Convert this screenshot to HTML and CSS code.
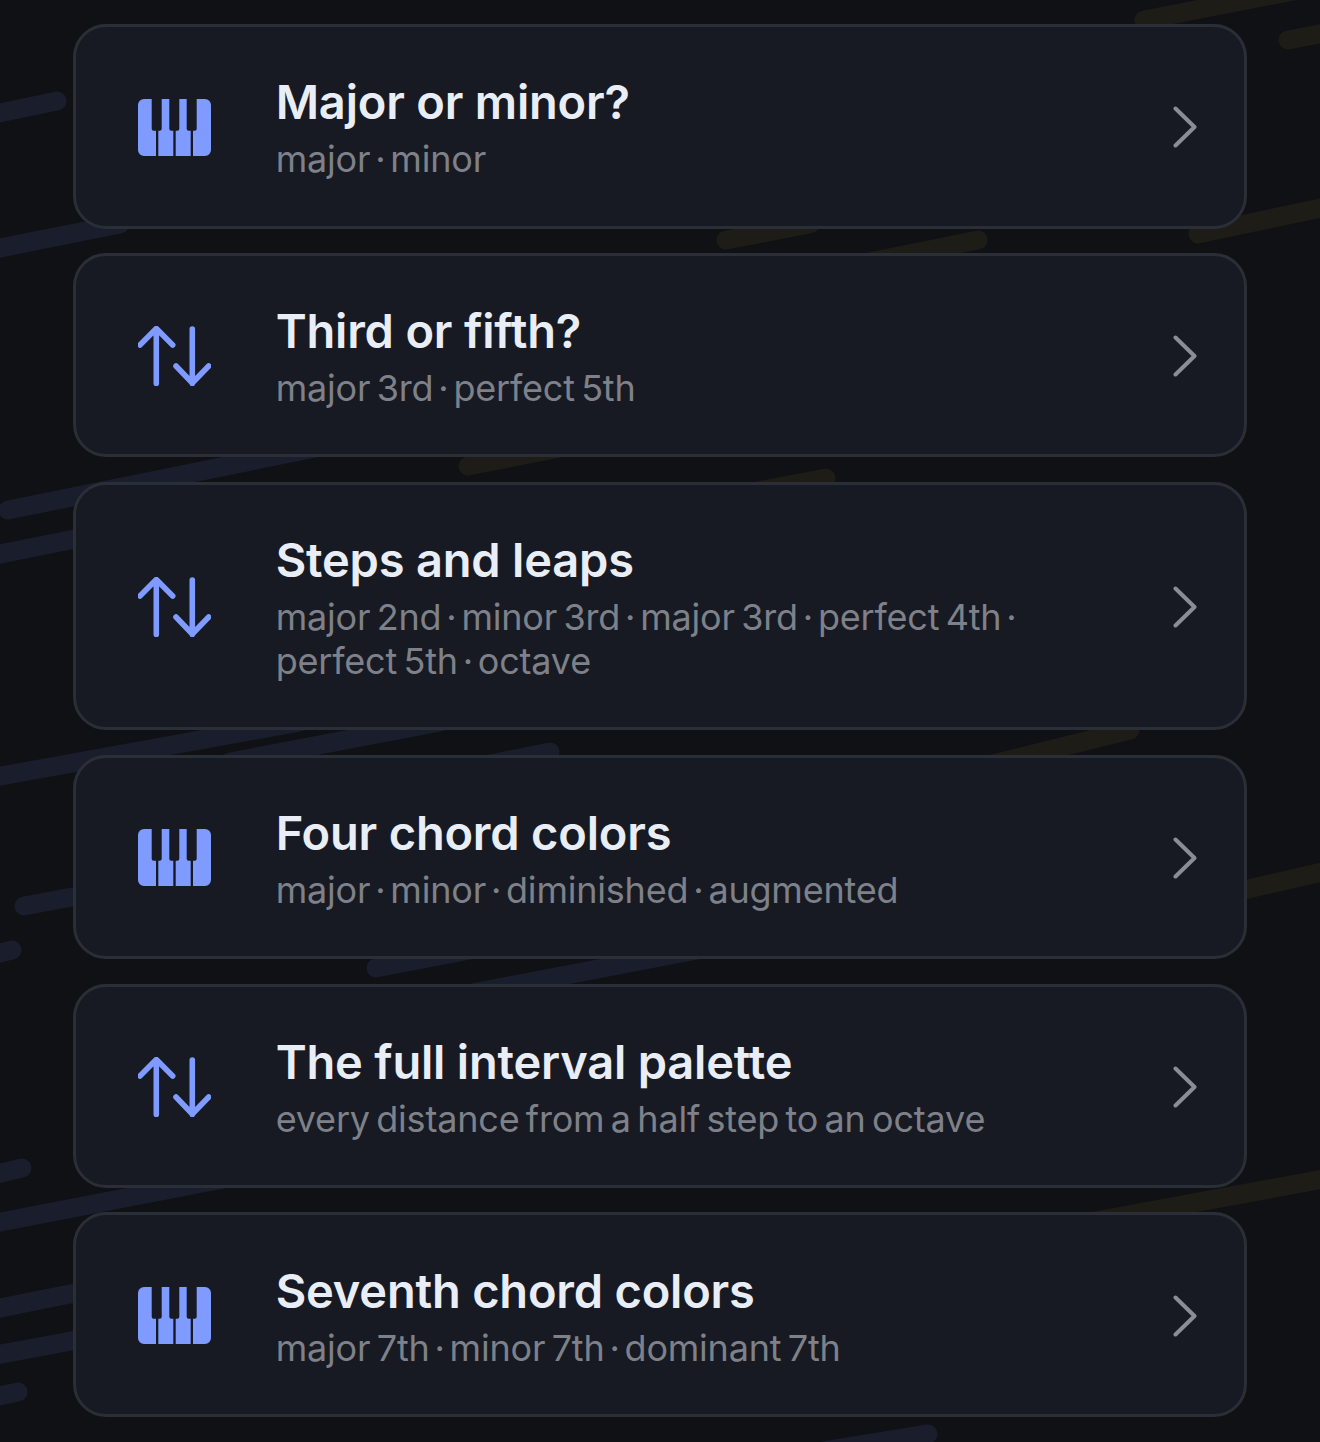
FILE: index.html
```html
<!DOCTYPE html>
<html lang="en">
<head>
    <meta charset="UTF-8">
    <meta name="viewport" content="width=device-width, initial-scale=1.0">
    <title>Ear training lessons</title>
    <link rel="stylesheet" href="styles.css">
</head>
<body>
    <!-- Icon definitions -->
    <svg class="icon-defs" aria-hidden="true">
        <symbol id="icon-piano" viewBox="0 0 73 57">
            <path d="M6 0H13.7V29.7a2 2 0 0 0 2 2H18V57H6a6 6 0 0 1-6-6V6a6 6 0 0 1 6-6Z"/>
            <path d="M23.7 0H31.3V29.7a2 2 0 0 0 2 2H35.3V57H20.3V31.7H21.7a2 2 0 0 0 2-2Z"/>
            <path d="M41.3 0H48.7V29.7a2 2 0 0 0 2 2H52.7V57H37.7V31.7H39.3a2 2 0 0 0 2-2Z"/>
            <path d="M58.7 0H67a6 6 0 0 1 6 6V51a6 6 0 0 1-6 6H55V31.7H56.7a2 2 0 0 0 2-2Z"/>
        </symbol>
        <symbol id="icon-arrows" viewBox="0 0 73 60">
            <path d="M18.3 57.5V3M2 19 18.3 2.5 34.7 19M54.3 3V57.5M38 40 54.3 57 70.7 40" fill="none" stroke="currentColor" stroke-width="5.6" stroke-linecap="round" stroke-linejoin="round"/>
        </symbol>
        <symbol id="icon-chevron" viewBox="0 0 24 42">
            <path d="M2.5 2.5 21.5 21 2.5 39.5" fill="none" stroke="currentColor" stroke-width="4" stroke-linecap="round" stroke-linejoin="round"/>
        </symbol>
    </svg>

    <!-- Background streaks -->
    <svg class="streaks" viewBox="0 0 1320 1442" aria-hidden="true">
        <g class="streaks-blue">
            <path d="M-20 117 57 101"/>
            <path d="M-20 252 120 224"/>
            <path d="M8 510 340 443"/>
            <path d="M-20 558 120 530"/>
            <path d="M-10 778 300 722"/>
            <path d="M230 762 440 722"/>
            <path d="M470 768 550 752"/>
            <path d="M24 906 120 888"/>
            <path d="M-20 958 12 950"/>
            <path d="M376 968 480 948"/>
            <path d="M467 994 760 938"/>
            <path d="M-20 1178 22 1168"/>
            <path d="M-20 1226 280 1168"/>
            <path d="M-20 1312 120 1284"/>
            <path d="M-20 1358 120 1332"/>
            <path d="M-20 1400 18 1392"/>
            <path d="M780 1458 928 1434"/>
        </g>
        <g class="streaks-gold">
            <path d="M1144 20 1340 -18"/>
            <path d="M1288 40 1340 30"/>
            <path d="M726 240 810 224"/>
            <path d="M820 272 978 240"/>
            <path d="M1198 234 1340 204"/>
            <path d="M468 466 560 448"/>
            <path d="M720 498 826 478"/>
            <path d="M960 772 1130 730"/>
            <path d="M1200 900 1340 868"/>
            <path d="M1090 1222 1340 1176"/>
        </g>
    </svg>

    <main class="lesson-list">
        <a class="lesson-card" href="#">
            <svg class="lesson-icon piano"><use href="#icon-piano"/></svg>
            <div class="lesson-text">
                <h2 class="lesson-title">Major or minor?</h2>
                <p class="lesson-sub">major <span class="dot">·</span> minor</p>
            </div>
            <svg class="lesson-chevron"><use href="#icon-chevron"/></svg>
        </a>
        <a class="lesson-card" href="#">
            <svg class="lesson-icon arrows"><use href="#icon-arrows"/></svg>
            <div class="lesson-text">
                <h2 class="lesson-title">Third or fifth?</h2>
                <p class="lesson-sub">major 3rd <span class="dot">·</span> perfect 5th</p>
            </div>
            <svg class="lesson-chevron"><use href="#icon-chevron"/></svg>
        </a>
        <a class="lesson-card" href="#">
            <svg class="lesson-icon arrows"><use href="#icon-arrows"/></svg>
            <div class="lesson-text">
                <h2 class="lesson-title">Steps and leaps</h2>
                <p class="lesson-sub">major 2nd <span class="dot">·</span> minor 3rd <span class="dot">·</span> major 3rd <span class="dot">·</span> perfect 4th <span class="dot">·</span> perfect 5th <span class="dot">·</span> octave</p>
            </div>
            <svg class="lesson-chevron"><use href="#icon-chevron"/></svg>
        </a>
        <a class="lesson-card" href="#">
            <svg class="lesson-icon piano"><use href="#icon-piano"/></svg>
            <div class="lesson-text">
                <h2 class="lesson-title">Four chord colors</h2>
                <p class="lesson-sub">major <span class="dot">·</span> minor <span class="dot">·</span> diminished <span class="dot">·</span> augmented</p>
            </div>
            <svg class="lesson-chevron"><use href="#icon-chevron"/></svg>
        </a>
        <a class="lesson-card" href="#">
            <svg class="lesson-icon arrows"><use href="#icon-arrows"/></svg>
            <div class="lesson-text">
                <h2 class="lesson-title">The full interval palette</h2>
                <p class="lesson-sub">every distance from a half step to an octave</p>
            </div>
            <svg class="lesson-chevron"><use href="#icon-chevron"/></svg>
        </a>
        <a class="lesson-card" href="#">
            <svg class="lesson-icon piano"><use href="#icon-piano"/></svg>
            <div class="lesson-text">
                <h2 class="lesson-title">Seventh chord colors</h2>
                <p class="lesson-sub">major 7th <span class="dot">·</span> minor 7th <span class="dot">·</span> dominant 7th</p>
            </div>
            <svg class="lesson-chevron"><use href="#icon-chevron"/></svg>
        </a>
    </main>
</body>
</html>
```

FILE: styles.css
```css
/* Base Reset */
* {
    margin: 0;
    padding: 0;
    box-sizing: border-box;
}

html,
body {
    height: 1442px;
    overflow: hidden;
}

body {
    position: relative;
    font-family: Inter, "Liberation Sans", sans-serif;
    background-color: #0f1115;
}

.icon-defs {
    display: none;
}

/* Background streaks */
.streaks {
    position: absolute;
    top: 0;
    left: 0;
    width: 1320px;
    height: 1442px;
}

.streaks path {
    fill: none;
    stroke-width: 19;
    stroke-linecap: round;
}

.streaks-blue {
    stroke: #1a1d2c;
}

.streaks-gold {
    stroke: #1e1c17;
}

/* Lesson list */
.lesson-list {
    position: relative;
    display: flex;
    flex-direction: column;
    gap: 24.3px;
    padding: 24px 72.7px 0;
}

.lesson-card {
    display: flex;
    align-items: center;
    padding: 46.3px 47px 44.3px 62px;
    background-color: #171a22;
    border: 3px solid #2a2e37;
    border-radius: 33px;
    text-decoration: none;
}

.lesson-icon {
    flex: none;
    width: 73px;
    color: #7f9bff;
    fill: #7f9bff;
}

.lesson-icon.piano {
    height: 57px;
}

.lesson-icon.arrows {
    height: 60px;
}

.lesson-text {
    flex: 1;
    margin-left: 65px;
    padding-right: 131px;
}

.lesson-title {
    margin-bottom: 6px;
    font-size: 47px;
    font-weight: 600;
    line-height: 58px;
    letter-spacing: -0.2px;
    color: #e9edf6;
}

.lesson-sub {
    font-size: 36px;
    font-weight: 400;
    line-height: 44px;
    letter-spacing: -0.2px;
    word-spacing: -3.5px;
    color: #7e8189;
}

.dot {
    margin: 0 -1.5px;
}

.lesson-chevron {
    flex: none;
    width: 24px;
    height: 42px;
    color: #8b8d94;
}
```
